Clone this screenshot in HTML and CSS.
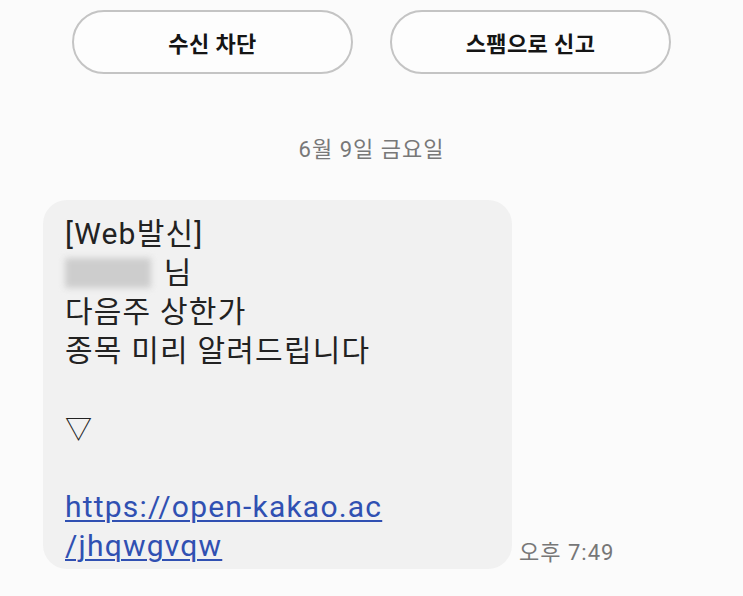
FILE: index.html
```html
<!DOCTYPE html>
<html lang="ko">
<head>
<meta charset="utf-8">
<title>메시지</title>
<link rel="stylesheet" href="styles.css">
</head>
<body>
<div class="screen">
  <div class="actions">
    <button class="pill">수신 차단</button>
    <button class="pill">스팸으로 신고</button>
  </div>

  <div class="date">6월 9일 금요일</div>

  <div class="row">
    <div class="bubble">
      <div class="line">[Web발신]</div>
      <div class="line"><span class="masked"></span> 님</div>
      <div class="line">다음주 상한가</div>
      <div class="line">종목 미리 알려드립니다</div>
      <div class="line">&nbsp;</div>
      <div class="line"><span class="mark">▽</span></div>
      <div class="line">&nbsp;</div>
      <a class="link" href="#">https://open-kakao.ac<br>/jhqwgvqw</a>
    </div>
    <div class="time">오후 7:49</div>
  </div>
</div>
</body>
</html>
```

FILE: styles.css
```css
html, body {
  margin: 0;
  padding: 0;
  background: #fbfbfb;
}

.screen {
  width: 743px;
  height: 596px;
  overflow: hidden;
  font-family: "Roboto", "Noto Sans CJK KR", sans-serif;
  display: flex;
  flex-direction: column;
}

.actions {
  display: flex;
  gap: 37px;
  padding: 10px 0 0 72px;
}

.pill {
  box-sizing: border-box;
  width: 281px;
  height: 64px;
  border: 2px solid #c4c4c4;
  border-radius: 32px;
  background: #fdfdfd;
  font-family: "Roboto", "Noto Sans CJK KR", sans-serif;
  font-size: 22px;
  letter-spacing: 0.4px;
  font-weight: 700;
  color: #151515;
  padding: 0;
}

.date {
  margin-top: 62px;
  text-align: center;
  font-size: 22px;
  letter-spacing: 1px;
  line-height: 28px;
  color: #787878;
}

.row {
  display: flex;
  align-items: flex-end;
  margin-top: 36px;
  padding-left: 43px;
}

.bubble {
  box-sizing: border-box;
  width: 469px;
  background: #f1f1f1;
  border-radius: 24px;
  padding: 14px 22px 4px;
  font-size: 30px;
  letter-spacing: 1.2px;
  line-height: 39px;
  color: #222;
}

.line {
  height: 39px;
  white-space: nowrap;
}

.mark {
  font-size: 27px;
  letter-spacing: 0;
}

.masked {
  display: inline-block;
  width: 86px;
  height: 30px;
  vertical-align: -5px;
  background: #cdcdcd;
  filter: blur(3px);
  margin-right: 4px;
}

.link {
  display: block;
  color: #3050b2;
  text-decoration: underline;
  text-decoration-thickness: 2px;
  text-underline-offset: 3px;
}

.time {
  margin-left: 7px;
  margin-bottom: 2px;
  font-size: 22px;
  letter-spacing: 1px;
  line-height: 28px;
  color: #777;
  white-space: nowrap;
}
```
